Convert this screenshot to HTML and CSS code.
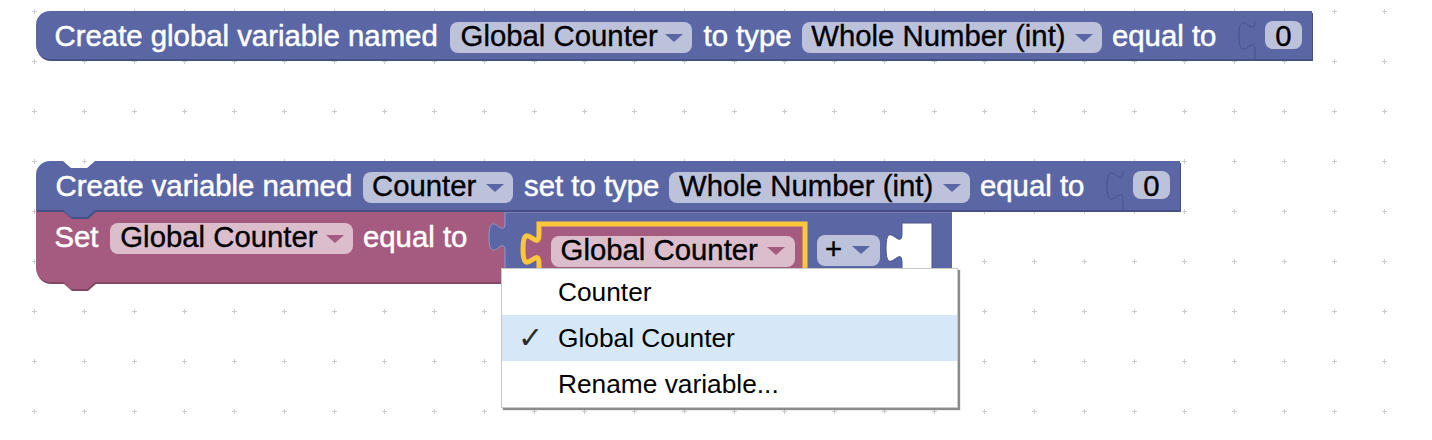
FILE: index.html
```html
<!DOCTYPE html>
<html>
<head>
<meta charset="utf-8">
<title>Blockly workspace</title>
<link rel="stylesheet" href="styles.css">
</head>
<body>
<div class="workspace">
  <svg class="canvas" width="1432" height="440" viewBox="0 0 1432 440">
    <defs>
      <pattern id="grid" x="0" y="0" width="50" height="50" patternUnits="userSpaceOnUse">
        <path class="grid-mark" d="M32 11.5H37M34.5 9V14"/>
      </pattern>
    </defs>
    <rect class="grid-bg" width="1432" height="440"/>

    <!-- Block 1: Create global variable -->
    <g>
      <path class="d-blue" transform="translate(1,2)" d="M36,25A14,14 0 0 1 50,11H1256V59H50A14,14 0 0 1 36,45Z"/>
      <path class="b-blue" d="M36,25A14,14 0 0 1 50,11H1256V59H50A14,14 0 0 1 36,45Z"/>
      <text class="label" x="54.6" y="45.5">Create global variable named</text>
      <rect class="f-blue" x="450" y="22" width="242" height="31" rx="8"/>
      <text class="label value" x="460.6" y="45.5">Global Counter</text>
      <polygon class="a-blue" points="665,34 683,34 674,42"/>
      <text class="label" x="703.5" y="45.5">to type</text>
      <rect class="f-blue" x="802" y="22" width="300" height="31" rx="8"/>
      <text class="label value" x="811.3" y="45.5">Whole Number (int)</text>
      <polygon class="a-blue" points="1075,34 1093,34 1084,42"/>
      <text class="label" x="1112" y="45.5">equal to</text>
      <!-- value block 0 -->
      <rect class="d-blue" x="1256" y="13" width="57" height="48"/>
      <path class="b-blue" d="M1255,11H1312V59H1255V51c0,-20 -16,16 -16,-15s16,5 16,-15Z"/>
      <path class="tab-line" d="M1255,51c0,-20 -16,16 -16,-15s16,5 16,-15M1255,51V59"/>
      <rect class="f-blue" x="1265" y="21" width="37" height="28" rx="8"/>
      <text class="label value mid" x="1283.5" y="45.5">0</text>
    </g>

    <!-- Set block (pink) -->
    <g>
      <path class="d-pink" transform="translate(1,2)" d="M36,210H506V282H95l-8,7h-16l-8,-7H50A14,14 0 0 1 36,268Z"/>
      <path class="b-pink" d="M36,210H506V282H95l-8,7h-16l-8,-7H50A14,14 0 0 1 36,268Z"/>
      <text class="label" x="54.5" y="246.5">Set</text>
      <rect class="f-pink" x="110" y="223" width="243" height="31" rx="8"/>
      <text class="label value" x="120.3" y="246.5">Global Counter</text>
      <polygon class="a-pink" points="326,235 344,235 335,243"/>
      <text class="label" x="363" y="246.5">equal to</text>

      <!-- math block -->
      <path class="b-blue" d="M505,212H952V283H505V252c0,-20 -16,16 -16,-15s16,5 16,-15Z"/>
      <path class="hi-line" d="M505,283V252c0,-20 -16,16 -16,-15s16,5 16,-15V212H952"/>

      <!-- selected variable getter -->
      <path class="b-pink selected" d="M539,224H805V279H539V264c0,-20 -16,16 -16,-15s16,5 16,-15Z"/>
      <rect class="f-pink" x="551" y="236" width="244" height="31" rx="8"/>
      <text class="label value" x="560.6" y="259.5">Global Counter</text>
      <polygon class="a-pink" points="767,247 785,247 776,255"/>

      <!-- operator dropdown -->
      <rect class="f-blue" x="817" y="235" width="63" height="31" rx="8"/>
      <text class="label value" x="825" y="258.5">+</text>
      <polygon class="a-blue" points="852,246 870,246 861,254"/>

      <!-- empty inline input -->
      <path class="hole" d="M902,223H932V279H902V263c0,-20 -16,16 -16,-15s16,5 16,-15Z"/>
    </g>

    <!-- Block 2: Create variable -->
    <g>
      <path class="d-blue" transform="translate(1,2)" d="M36,175A14,14 0 0 1 50,161H63l8,7h16l8,-7H1124V210H95l-8,7h-16l-8,-7H36Z"/>
      <path class="b-blue" d="M36,175A14,14 0 0 1 50,161H63l8,7h16l8,-7H1124V210H95l-8,7h-16l-8,-7H36Z"/>
      <text class="label" x="55.5" y="195.5">Create variable named</text>
      <rect class="f-blue" x="363" y="172" width="150" height="31" rx="8"/>
      <text class="label value" x="372" y="195.5">Counter</text>
      <polygon class="a-blue" points="486,184 504,184 495,192"/>
      <text class="label" x="524" y="195.5">set to type</text>
      <rect class="f-blue" x="669" y="172" width="301" height="31" rx="8"/>
      <text class="label value" x="679" y="195.5">Whole Number (int)</text>
      <polygon class="a-blue" points="943,184 961,184 952,192"/>
      <text class="label" x="980" y="195.5">equal to</text>
      <!-- value block 0 -->
      <rect class="d-blue" x="1124" y="163" width="57" height="49"/>
      <path class="b-blue" d="M1123,161H1180V210H1123V201c0,-20 -16,16 -16,-15s16,5 16,-15Z"/>
      <path class="tab-line" d="M1123,201c0,-20 -16,16 -16,-15s16,5 16,-15M1123,201V210"/>
      <rect class="f-blue" x="1133" y="171" width="37" height="28" rx="8"/>
      <text class="label value mid" x="1151.5" y="195.5">0</text>
    </g>
  </svg>

  <div class="menu">
    <div class="item"><span class="check"></span><span class="text">Counter</span></div>
    <div class="item active"><span class="check">✓</span><span class="text">Global Counter</span></div>
    <div class="item"><span class="check"></span><span class="text">Rename variable...</span></div>
  </div>
</div>
</body>
</html>
```
FILE: styles.css
```css
html, body {
  margin: 0;
  padding: 0;
  background: #ffffff;
}

.workspace {
  position: relative;
  width: 1432px;
  height: 440px;
  overflow: hidden;
  background: #ffffff;
}

.canvas {
  display: block;
}

.grid-bg {
  fill: url(#grid);
}

.grid-mark {
  stroke: #cccccc;
  stroke-width: 1;
  fill: none;
}

.b-blue { fill: #5b67a5; }
.b-pink { fill: #a55b80; }
.d-blue { fill: #465085; }
.d-pink { fill: #834865; }
.f-blue { fill: #bdc2db; }
.f-pink { fill: #dbbdcc; }
.a-blue { fill: #5b67a5; }
.a-pink { fill: #a55b80; }

.tab-line {
  fill: none;
  stroke: #47528c;
  stroke-width: 1;
}

.hi-line {
  fill: none;
  stroke: #8f98c6;
  stroke-width: 1;
}

.hole {
  fill: #ffffff;
  stroke: #4a548e;
  stroke-width: 1;
}

.selected {
  stroke: #fcc73d;
  stroke-width: 5;
}

.label {
  font-family: "Liberation Sans", Arial, Helvetica, sans-serif;
  font-size: 29.33px;
  fill: #ffffff;
  stroke: #ffffff;
  stroke-width: 0.5px;
}

.label.value {
  fill: #000000;
  stroke: #000000;
  stroke-width: 0.35px;
}

.label.mid {
  text-anchor: middle;
}

.menu {
  position: absolute;
  left: 501px;
  top: 268px;
  width: 457px;
  box-sizing: border-box;
  border: 1px solid #c9c9c9;
  background: #ffffff;
  box-shadow: 2px 2px 1px rgba(0, 0, 0, 0.45);
  font-family: "Liberation Sans", Arial, Helvetica, sans-serif;
  font-size: 26.3px;
  color: #000000;
}

.item {
  display: flex;
  height: 46px;
  line-height: 46px;
}

.item.active {
  background: #d6e8f7;
}

.check {
  width: 56px;
  flex: none;
  box-sizing: border-box;
  padding-left: 16px;
  font-family: "DejaVu Sans", sans-serif;
  font-size: 30px;
  line-height: 46px;
  color: #2b2b2b;
}

.text {
  white-space: nowrap;
}
```
